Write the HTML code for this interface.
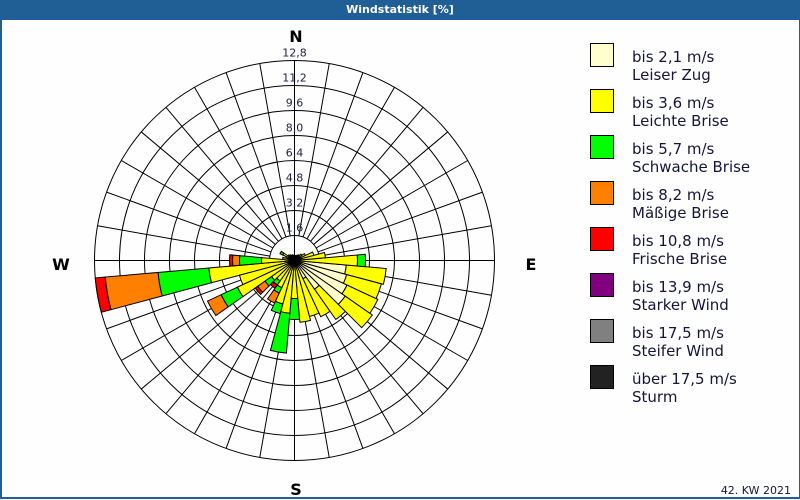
<!DOCTYPE html>
<html><head><meta charset="utf-8"><style>
html,body{margin:0;padding:0;width:800px;height:500px;overflow:hidden;background:#fdfefd;}
#hdr{position:absolute;left:0;top:0;width:800px;height:20px;background:#1f5f96;color:#fff;font:bold 11px "DejaVu Sans","Liberation Sans",sans-serif;text-align:center;line-height:20px;}
#frame{position:absolute;left:0;top:20px;width:797px;height:477px;border-left:2px solid #1f5f96;border-right:2px solid #1f5f96;border-bottom:2px solid #1f5f96;box-sizing:content-box;}
svg{position:absolute;left:0;top:0;}
.lg{font:15px "DejaVu Sans","Liberation Sans",sans-serif;fill:#15153a;}
</style></head><body>
<div id="hdr">Windstatistik [%]</div>
<div id="frame"></div>
<svg id="s" width="800" height="500" xmlns="http://www.w3.org/2000/svg"></svg>
<script>
var cx=294.5,cy=260.5,s=document.getElementById('s'),h='';
function P(r,a){a=a*Math.PI/180;return [cx+r*Math.sin(a),cy-r*Math.cos(a)];}
function f(n){return n.toFixed(2);}
// grid
for(var k=1;k<=8;k++){h+='<circle cx="'+cx+'" cy="'+cy+'" r="'+(25*k)+'" fill="none" stroke="#000" stroke-width="1"/>';}
for(var a=0;a<360;a+=10){var p0=P(a%90==0?0:25,a),p1=P(200,a);h+='<line x1="'+f(p0[0])+'" y1="'+f(p0[1])+'" x2="'+f(p1[0])+'" y2="'+f(p1[1])+'" stroke="#000" stroke-width="1"/>';}
var C=['#ffffcc','#ffff00','#00ff00','#ff8000','#ff0000'];
// [angle, [cumulative radii for classes 0..4]]
var D=[
[260,[0,86,137,190,200]],
[270,[0,33,55,62,65]],
[240,[0,63,81,96]],
[250,[0,57]],
[230,[0,28,36,45,48]],
[220,[0,25,30,30,34]],
[210,[0,30,36,47]],
[200,[0,45,55]],
[190,[0,53,93]],
[180,[0,38,59]],
[170,[0,62]],
[160,[0,58]],
[150,[20,62]],
[140,[35,72]],
[130,[62,95]],
[120,[58,92]],
[110,[54,90]],
[100,[52,92]],
[90,[0,63,71]],
[80,[0,31]],
[70,[0,20]],
[60,[0,12]],
[300,[0,13,16]],
[290,[0,9]],
[310,[0,8]],
[320,[0,7]],
[330,[0,6]],
[340,[0,6]],
[350,[0,5]],
[10,[0,5]],[20,[0,5]],[30,[0,6]],[40,[0,7]],[50,[0,9]],
[280,[0,12]]
];
D.forEach(function(d){var a=d[0],v=d[1],prev=0;for(var i=0;i<v.length;i++){var r=v[i];if(r>prev){var a0=a-5,a1=a+5,p=P(prev,a0),q=P(r,a0),t=P(r,a1),u=P(prev,a1);
h+='<path d="M'+f(p[0])+' '+f(p[1])+' L'+f(q[0])+' '+f(q[1])+' A'+r+' '+r+' 0 0 1 '+f(t[0])+' '+f(t[1])+' L'+f(u[0])+' '+f(u[1])+(prev>0?' A'+prev+' '+prev+' 0 0 0 '+f(p[0])+' '+f(p[1]):'')+' Z" fill="'+C[i]+'" stroke="#000" stroke-width="1"/>';prev=r;}}});
h+='<circle cx="'+cx+'" cy="'+cy+'" r="5" fill="#000"/>';
// scale labels
var L=['1,6','3,2','4,8','6,4','8,0','9,6','11,2','12,8'];
for(var k=1;k<=8;k++){h+='<text x="'+cx+'" y="'+(cy-25*k-4)+'" text-anchor="middle" font-family="DejaVu Sans,Liberation Sans,sans-serif" font-size="11" fill="#222244">'+L[k-1]+'</text>';}
var cf='font-family="DejaVu Sans,Liberation Sans,sans-serif" font-weight="bold" font-size="16" fill="#000" text-anchor="middle"';
h+='<text x="296" y="42" '+cf+'>N</text><text x="61" y="270" '+cf+'>W</text><text x="531" y="270" '+cf+'>E</text><text x="296" y="495" '+cf+'>S</text>';
// legend
var LG=[['#ffffcc','bis 2,1 m/s','Leiser Zug'],['#ffff00','bis 3,6 m/s','Leichte Brise'],['#00ff00','bis 5,7 m/s','Schwache Brise'],['#ff8000','bis 8,2 m/s','Mäßige Brise'],['#ff0000','bis 10,8 m/s','Frische Brise'],['#800080','bis 13,9 m/s','Starker Wind'],['#808080','bis 17,5 m/s','Steifer Wind'],['#222222','über 17,5 m/s','Sturm']];
LG.forEach(function(e,i){var y=43+46*i;h+='<rect x="590.5" y="'+(y+0.5)+'" width="23" height="23" fill="'+e[0]+'" stroke="#000"/>';
h+='<text class="lg" x="632" y="'+(y+19)+'">'+e[1]+'</text><text class="lg" x="632" y="'+(y+37)+'">'+e[2]+'</text>';});
h+='<text x="791" y="494" text-anchor="end" font-family="DejaVu Sans,Liberation Sans,sans-serif" font-size="11" fill="#15153a">42. KW 2021</text>';
s.innerHTML=h;
</script>
</body></html>
